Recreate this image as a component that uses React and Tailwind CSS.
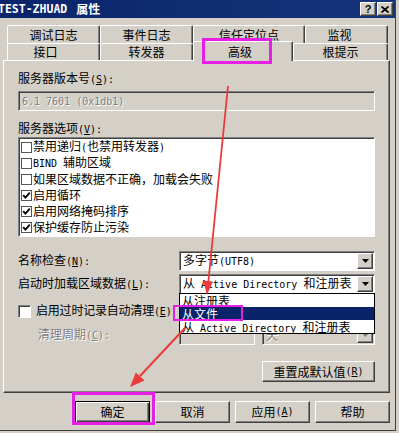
import React from 'react'

const raised = 'border border-t-white border-l-white border-r-[#404040] border-b-[#404040] shadow-[inset_-1px_-1px_0_#808080]'
const sunken = 'border border-t-[#808080] border-l-[#808080] border-r-white border-b-white shadow-[inset_1px_1px_0_#404040]'
const grayText = 'text-[#808080] [text-shadow:1px_1px_0_#fff]'

// half-width latin run, like SimSun's 6px ascii
const L = ({ children }) => (
  <span className="font-['DejaVu_Sans_Mono',monospace] text-[10px]">{children}</span>
)

const Key = ({ k }) => (
  <L>
    (<span className="underline">{k}</span>)
  </L>
)

const DownArrow = ({ color = '#000' }) => (
  <svg width="7" height="4" viewBox="0 0 7 4">
    <polygon points="0,0 7,0 3.5,4" fill={color} />
  </svg>
)

const Combo = ({ children, disabled, className = '', overlay }) => (
  <div className={`relative h-[20px] flex items-center ${sunken} ${disabled ? 'bg-[#d4d0c8]' : 'bg-white'} ${className}`}>
    <div className={`flex-1 min-w-0 pl-[3px] whitespace-nowrap overflow-hidden ${disabled ? grayText : ''}`}>{children}</div>
    <div className={`w-[16px] h-[16px] mr-[1px] flex items-center justify-center bg-[#d4d0c8] ${raised}`}>
      <DownArrow color={disabled ? '#808080' : '#000'} />
    </div>
    {overlay}
  </div>
)

const Tab = ({ label, className, active }) =>
  active ? (
    <div className={`relative z-10 h-[20px] -mb-px flex items-center justify-center bg-[#d4d0c8] rounded-t-[2px] border-t border-l border-r border-t-white border-l-white border-r-[#404040] shadow-[inset_-1px_0_0_#808080] ${className}`}>
      {label}
    </div>
  ) : (
    <div className={`h-full flex items-center justify-center rounded-t-[2px] border-t border-l border-r border-t-white border-l-white border-r-[#404040] shadow-[inset_-1px_0_0_#808080] ${className}`}>
      {label}
    </div>
  )

const ListCheck = ({ checked }) => (
  <div className="ml-[2px] w-[11px] h-[11px] border border-[#555] bg-white flex items-center justify-center">
    {checked && (
      <svg width="9" height="9" viewBox="0 0 9 9">
        <polyline points="1.2,4.2 3.4,6.6 7.8,1.6" fill="none" stroke="#000" strokeWidth="1.8" />
      </svg>
    )}
  </div>
)

const options = [
  { label: <>禁用递归<L>(</L>也禁用转发器<L>)</L></>, checked: false },
  { label: <><L>BIND </L>辅助区域</>, checked: false },
  { label: <>如果区域数据不正确，加载会失败</>, checked: false },
  { label: <>启用循环</>, checked: true },
  { label: <>启用网络掩码排序</>, checked: true },
  { label: <>保护缓存防止污染</>, checked: true },
]

const Button = ({ children, className = '', isDefault }) => (
  <div
    className={`flex items-center justify-center bg-[#d4d0c8] ${
      isDefault
        ? 'border border-black shadow-[inset_1px_1px_0_#fff,inset_-1px_-1px_0_#404040,inset_-2px_-2px_0_#808080]'
        : raised
    } ${className}`}
  >
    {children}
  </div>
)

const TitleBar = () => (
  <div className="h-[18px] flex items-center pr-[2px] bg-linear-to-r from-[#0a246a] to-[#16347c]">
    <span className="ml-[-2px] font-['DejaVu_Sans_Mono',monospace] font-bold text-[11.5px] text-white">TEST-ZHUAD</span>
    <span className="ml-[9px] font-bold text-white">属性</span>
    <div className="ml-auto flex gap-[1px]">
      <div className={`w-[16px] h-[14px] bg-[#d4d0c8] flex items-center justify-center font-['Liberation_Sans',sans-serif] font-bold text-[11px] leading-none ${raised}`}>
        ?
      </div>
      <div className={`w-[16px] h-[14px] bg-[#d4d0c8] flex items-center justify-center ${raised}`}>
        <svg width="8" height="7" viewBox="0 0 8 7">
          <path d="M0.5 0.5 L7.5 6.5 M7.5 0.5 L0.5 6.5" stroke="#000" strokeWidth="1.7" />
        </svg>
      </div>
    </div>
  </div>
)

export default function App() {
  return (
    <div className="relative w-[399px] h-[433px] overflow-hidden bg-[#d4d0c8] font-['Noto_Sans_CJK_SC','Noto_Sans',sans-serif] text-[12px] leading-[14px] text-black">
      <div className="w-[396px] h-[431px] flex flex-col border-r border-b border-[#404040]">
        <TitleBar />

        <div className="pl-[3px] pr-[5px] flex flex-col">
          {/* tab rows */}
          <div className="mt-[7px] pl-[4px] flex flex-col">
            <div className="h-[18px] flex">
              <Tab label="调试日志" className="w-[93px]" />
              <Tab label="事件日志" className="w-[93px]" />
              <Tab label="信任定位点" className="w-[112px]" />
              <Tab label="监视" className="w-[83px] pr-[14px]" />
            </div>
            <div className="h-[17px] flex items-end">
              <Tab label="接口" className="w-[93px] pr-[16px]" />
              <Tab label="转发器" className="w-[93px]" />
              <Tab label="高级" className="w-[100px] pr-[6px]" active />
              <Tab label="根提示" className="w-[95px]" />
            </div>
          </div>

          {/* panel */}
          <div className={`h-[333px] flex flex-col pl-[14px] pr-[14px] pt-[10px] ${raised}`}>
            <div className="h-[14px]">
              服务器版本号<Key k="S" /><L>:</L>
            </div>
            <div className={`mt-[6px] h-[20px] flex items-center pl-[3px] ${sunken}`}>
              <span className={grayText}>
                <L>6.1 7601 (0x1db1)</L>
              </span>
            </div>

            <div className="mt-[10px] h-[14px]">
              服务器选项<Key k="V" /><L>:</L>
            </div>
            <div className={`mt-[2px] h-[100px] bg-white flex flex-col ${sunken}`}>
              <div className="pt-[1px]">
                {options.map((o, i) => (
                  <div key={i} className="h-[16px] flex items-center gap-[1px] whitespace-nowrap">
                    <ListCheck checked={o.checked} />
                    <span>{o.label}</span>
                  </div>
                ))}
              </div>
            </div>

            <div className="mt-[14px] h-[20px] flex items-center">
              <div className="w-[161px]">
                名称检查<Key k="N" /><L>:</L>
              </div>
              <Combo className="flex-1">
                多字节<L>(UTF8)</L>
              </Combo>
            </div>

            <div className="relative z-20 mt-[3px] h-[20px] flex items-center">
              <div className="w-[161px]">
                启动时加载区域数据<Key k="L" /><L>:</L>
              </div>
              <Combo
                className="flex-1"
                overlay={
                  <div className="absolute left-[-1px] right-[-1px] top-[18px] border border-black bg-white flex flex-col">
                    <div className="h-[13px] leading-[13px] pl-[2px]">从注册表</div>
                    <div className="h-[13px] leading-[13px] pl-[2px] bg-[#0a246a] text-white">从文件</div>
                    <div className="h-[13px] leading-[13px] pl-[2px] whitespace-nowrap">
                      从<L> Active Directory </L>和注册表
                    </div>
                  </div>
                }
              >
                从<L> Active Directory </L>和注册表
              </Combo>
            </div>

            <div className="mt-[10px] h-[14px] flex items-center gap-[5px]">
              <div className={`w-[13px] h-[13px] bg-white ${sunken}`} />
              <span className="tracking-[-0.2px]">
                启用过时记录自动清理<Key k="E" />
              </span>
            </div>

            <div className="mt-[7px] h-[20px] flex items-center">
              <div className={`w-[161px] pl-[20px] ${grayText}`}>
                清理周期<Key k="C" /><L>:</L>
              </div>
              <div className={`w-[76px] h-[20px] bg-[#d4d0c8] ${sunken}`} />
              <Combo className="ml-[7px] w-[113px]" disabled>
                天
              </Combo>
            </div>

            <Button className="mt-[16px] self-end w-[113px] h-[21px]">
              重置成默认值<Key k="R" />
            </Button>
          </div>

          {/* dialog buttons */}
          <div className="mt-[8px] flex justify-end gap-[5px]">
            <Button className="w-[75px] h-[22px]" isDefault>确定</Button>
            <Button className="w-[75px] h-[22px]">取消</Button>
            <Button className="w-[75px] h-[22px]">
              应用<Key k="A" />
            </Button>
            <Button className="w-[75px] h-[22px]">帮助</Button>
          </div>
        </div>
      </div>

      {/* annotations */}
      <div className="absolute left-[202px] top-[38px] w-[70px] h-[26px] border-[3px] border-[#e61ee6] z-30" />
      <div className="absolute left-[173px] top-[305px] w-[70px] h-[16px] border-[2px] border-[#e61ee6] z-30" />
      <div className="absolute left-[72px] top-[392px] w-[83px] h-[33px] border-[3px] border-[#e61ee6] z-30" />

      <svg className="absolute inset-0 z-40 pointer-events-none" width="399" height="433" viewBox="0 0 399 433">
        <line x1="228" y1="86" x2="208.3" y2="282" stroke="#ea3b3b" strokeWidth="1.8" />
        <polygon points="207,295 212.9,281.5 203.1,280.6" fill="#ea3b3b" />
        <line x1="185" y1="328" x2="140" y2="376" stroke="#ea3b3b" strokeWidth="2" />
        <polygon points="130,387 144.6,380.6 135.8,372.4" fill="#ea3b3b" />
      </svg>
    </div>
  )
}
